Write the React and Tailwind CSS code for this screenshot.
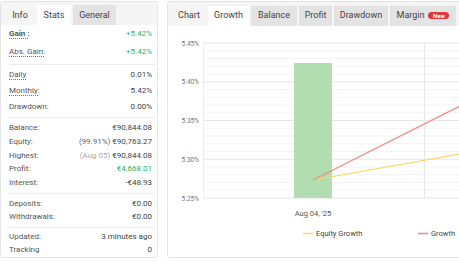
import React from 'react';

const font = { fontFamily: 'Roboto, "Liberation Sans", sans-serif' };

function Row({ label, value, h, dotted, bold, valueClass, prefix }) {
  return (
    <div className={`flex items-center justify-between pl-2 pr-[5px] ${h}`}>
      <span
        className={`text-[#555] ${bold ? 'font-bold text-[#444]' : ''} ${dotted ? 'underline decoration-dotted decoration-[#777] underline-offset-2' : ''}`}
      >
        {label}
      </span>
      <span className={valueClass || 'text-[#444]'}>
        {prefix}
        {value}
      </span>
    </div>
  );
}

function Sep() {
  return <div className="ml-2 mr-[2px] h-px bg-[#ececec]" />;
}

function Tab({ children, w, kind }) {
  const bg = kind === 'active' ? 'bg-white' : kind === 'plain' ? 'bg-transparent' : 'bg-[#e3e3e3]';
  return (
    <div className={`flex h-[20px] items-center justify-center text-[9px] text-[#444] ${bg} ${w}`}>
      {children}
    </div>
  );
}

function StatsPanel() {
  return (
    <div className="flex h-[257px] w-[158px] shrink-0 flex-col overflow-hidden rounded-[3px] border border-[#e4e4e4] bg-white text-[8px]">
      <div className="flex h-[24px] items-end gap-[2px] bg-[#f5f5f5] pl-[4px]">
        <Tab w="w-[30px]" kind="plain">Info</Tab>
        <Tab w="w-[34px]" kind="active">Stats</Tab>
        <Tab w="w-[43px]">General</Tab>
      </div>
      <div className="pb-[3px]">
        <Row label="Gain :" value="+5.42%" h="h-[18px]" dotted bold valueClass="text-[#2fb254]" />
        <Row label="Abs. Gain:" value="+5.42%" h="h-[18px]" dotted valueClass="text-[#2fb254]" />
      </div>
      <Sep />
      <div className="pt-[2px] pb-[2px]">
        <Row label="Daily" value="0.01%" h="h-[16px]" dotted />
        <Row label="Monthly:" value="5.42%" h="h-[16px]" dotted />
        <Row label="Drawdown:" value="0.00%" h="h-[16px]" />
      </div>
      <Sep />
      <div className="pt-[3px] pb-[3px]">
        <Row label="Balance:" value="€90,844.08" h="h-[13.75px]" />
        <Row
          label="Equity:"
          value="€90,763.27"
          h="h-[13.75px]"
          prefix={<span className="text-[#666]">(99.91%) </span>}
        />
        <Row
          label="Highest:"
          value="€90,844.08"
          h="h-[13.75px]"
          prefix={<span className="text-[#aaa]">(Aug 05) </span>}
        />
        <Row label="Profit:" value="€4,668.01" h="h-[13.75px]" valueClass="text-[#2fb254]" />
        <Row label="Interest:" value="-€48.93" h="h-[13.75px]" />
      </div>
      <Sep />
      <div className="pt-[3px] pb-[4px]">
        <Row label="Deposits:" value="€0.00" h="h-[13px]" />
        <Row label="Withdrawals:" value="€0.00" h="h-[13px]" />
      </div>
      <Sep />
      <div className="pt-[3px]">
        <Row label="Updated:" value="3 minutes ago" h="h-[13px]" />
        <Row label="Tracking" value="0" h="h-[13px]" />
      </div>
    </div>
  );
}

function GrowthChart() {
  const top = 17;
  const step = 38.75;
  const labels = ['5.45%', '5.40%', '5.35%', '5.30%', '5.25%'];
  const minor = [];
  for (let i = 0; i <= 20; i++) minor.push(top + i * (step / 5));
  return (
    <svg width="300" height="232" className="block">
      {minor.map((y, i) => (
        <line key={i} x1="35" x2="300" y1={y} y2={y} stroke={i % 5 === 0 ? '#e6e6e6' : '#f3f3f3'} strokeWidth="1" />
      ))}
      <line x1="35.5" x2="35.5" y1={top} y2={top + step * 4} stroke="#ececec" />
      <line x1="256.5" x2="256.5" y1={top} y2={top + step * 4} stroke="#e6e6e6" />
      {labels.map((t, i) => (
        <text key={t} x="31" y={top + i * step + 2.5} textAnchor="end" fontSize="6.5" fill="#777" style={font}>
          {t}
        </text>
      ))}
      <rect x="126" y="37" width="38" height="135" fill="#b2ddb0" />
      <line x1="145" y1="154" x2="300" y2="126.5" stroke="#fdd46a" strokeWidth="1.2" />
      <line x1="145" y1="154" x2="300" y2="76" stroke="#ef8a84" strokeWidth="1.2" />
      <text x="145" y="190" textAnchor="middle" fontSize="7.5" fill="#555" style={font}>
        Aug 04, '25
      </text>
      <line x1="135" x2="145" y1="207.5" y2="207.5" stroke="#fdd46a" strokeWidth="1.5" />
      <text x="148" y="210" fontSize="7.5" fill="#444" style={font}>
        Equity Growth
      </text>
      <line x1="250" x2="260" y1="207.5" y2="207.5" stroke="#ef8a84" strokeWidth="1.5" />
      <text x="263" y="210" fontSize="7.5" fill="#444" style={font}>
        Growth
      </text>
    </svg>
  );
}

function ChartPanel() {
  return (
    <div className="flex h-[257px] w-[310px] shrink-0 flex-col overflow-hidden rounded-[3px] border border-[#e4e4e4] bg-white">
      <div className="flex h-[24px] items-end gap-[2px] bg-[#f5f5f5] pl-[4px]">
        <Tab w="w-[34px]" kind="plain">Chart</Tab>
        <Tab w="w-[41px]" kind="active">Growth</Tab>
        <Tab w="w-[46px]">Balance</Tab>
        <Tab w="w-[33px]">Profit</Tab>
        <Tab w="w-[54px]">Drawdown</Tab>
        <Tab w="w-[66px]">
          <span className="flex items-center gap-[4px]">
            Margin
            <span className="flex h-[7px] w-[21px] items-center justify-center rounded-full bg-[#e2363c] text-[6px] font-bold text-white">New</span>
          </span>
        </Tab>
      </div>
      <GrowthChart />
    </div>
  );
}

export default function App() {
  return (
    <div className="flex h-[262px] w-[459px] gap-[9px] overflow-hidden bg-white pt-[1px]" style={font}>
      <StatsPanel />
      <ChartPanel />
    </div>
  );
}
